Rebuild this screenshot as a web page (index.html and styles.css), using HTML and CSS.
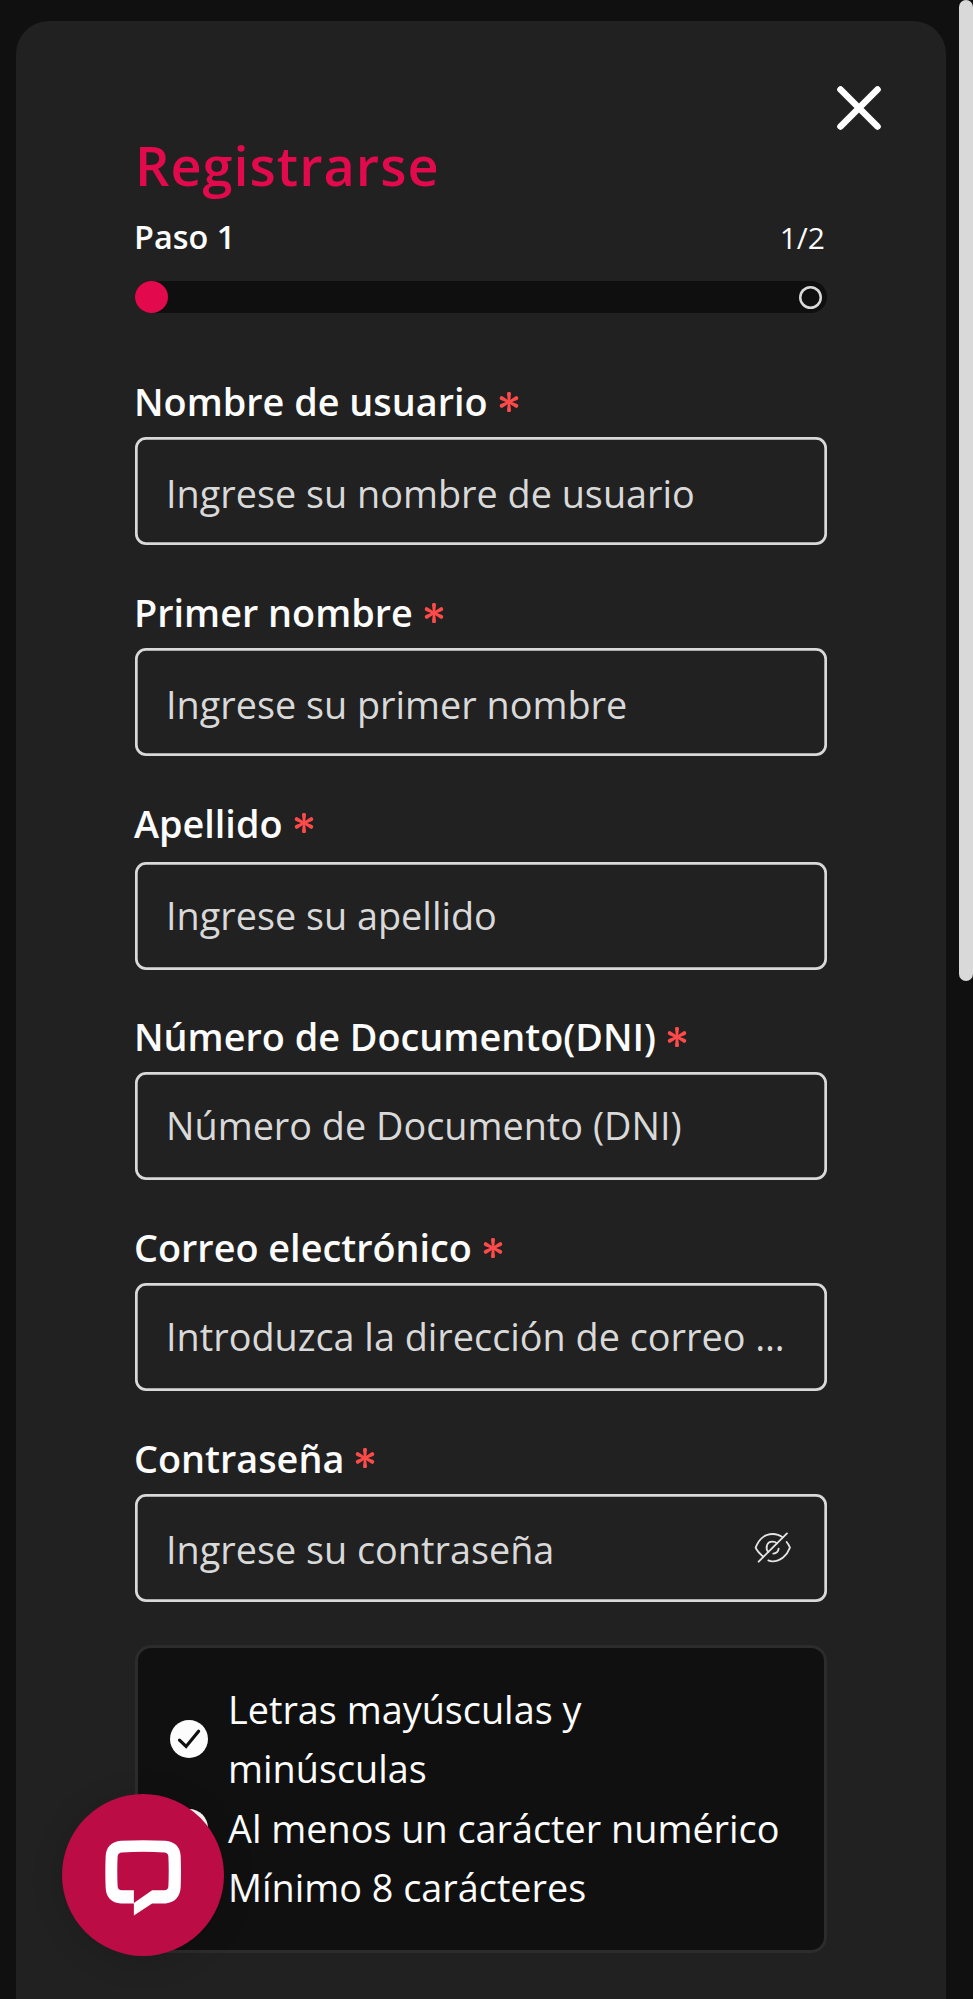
FILE: index.html
```
<!DOCTYPE html>
<html lang="es">

<head>
   <meta charset="UTF-8">
   <meta name="viewport" content="width=device-width, initial-scale=1.0">
   <title>Registrarse</title>
   <link rel="stylesheet" href="styles.css">
</head>

<body>
   <!-- shared icons -->
   <svg class="sprite">
      <symbol id="required" viewBox="0 0 20 20">
         <path d="M8 1.8a2 2 0 0 1 4 0L11 10l1 8.200a2 2 0 0 1-4 0L9 10z"/>
         <path d="M8 1.8a2 2 0 0 1 4 0L11 10l1 8.200a2 2 0 0 1-4 0L9 10z" transform="rotate(62 10 10)"/>
         <path d="M8 1.8a2 2 0 0 1 4 0L11 10l1 8.200a2 2 0 0 1-4 0L9 10z" transform="rotate(-62 10 10)"/>
      </symbol>
      <symbol id="check" viewBox="0 0 38 38">
         <circle cx="19" cy="19" r="19" fill="#fcfcfc"/>
         <path d="M9.5 20.2l6.6 6.3L28.6 11.300" fill="none" stroke="#101010" stroke-width="3.2" stroke-linecap="round"/>
      </symbol>
   </svg>

   <div class="modal">
      <button class="close" type="button" aria-label="Cerrar">
         <svg viewBox="0 0 44 44"><path d="M3.500 3.500l37 37M40.500 3.500l-37 37"/></svg>
      </button>

      <form class="form">
         <h1 class="title">Registrarse</h1>
         <div class="step">
            <span class="step-name">Paso 1</span>
            <span class="step-count">1/2</span>
         </div>
         <div class="progress">
            <span class="dot"></span>
            <span class="ring"></span>
         </div>

         <div class="field">
            <label for="user">Nombre de usuario <svg class="required"><use href="#required"/></svg></label>
            <input class="low" id="user" type="text" placeholder="Ingrese su nombre de usuario">
         </div>
         <div class="field">
            <label for="name">Primer nombre <svg class="required"><use href="#required"/></svg></label>
            <input class="low" id="name" type="text" placeholder="Ingrese su primer nombre">
         </div>
         <div class="field tall">
            <label for="surname">Apellido <svg class="required"><use href="#required"/></svg></label>
            <input id="surname" type="text" placeholder="Ingrese su apellido">
         </div>
         <div class="field">
            <label for="dni">Número de Documento(DNI) <svg class="required"><use href="#required"/></svg></label>
            <input id="dni" type="text" placeholder="Número de Documento (DNI)">
         </div>
         <div class="field">
            <label for="email">Correo electrónico <svg class="required"><use href="#required"/></svg></label>
            <input id="email" type="email" placeholder="Introduzca la dirección de correo electrónico">
         </div>
         <div class="field password">
            <label for="pass">Contraseña <svg class="required"><use href="#required"/></svg></label>
            <input class="low" id="pass" type="password" placeholder="Ingrese su contraseña">
            <svg class="eye" viewBox="762 877 112 92">
               <path d="M776 966L861 881"/>
               <path d="M790 951C780 943 771 934 767 924C776 899 795 883 818 883C829 883 839 886 848 893"/>
               <path d="M860 907C864 912 868 918 870 924C861 948 841 965 818 965C813 965 809 964 805 962"/>
               <path d="M805 937C795 926 800 906 817 906C822 906 827 907 831 911"/>
               <path d="M836 927C835 936 829 941 820 942"/>
            </svg>
         </div>

         <ul class="rules">
            <li><svg class="check"><use href="#check"/></svg><span>Letras mayúsculas y minúsculas</span></li>
            <li><svg class="check"><use href="#check"/></svg><span>Al menos un carácter numérico</span></li>
            <li><svg class="check"><use href="#check"/></svg><span>Mínimo 8 carácteres</span></li>
         </ul>
      </form>
   </div>

   <div class="scrollbar"></div>

   <button class="chat" type="button" aria-label="Chat">
      <svg viewBox="195 629 229 228">
         <path fill-rule="evenodd" d="M243 631Q310 627 377 631C405 634 421 648 423 676Q425 724 423 772C421 800 406 817 378 820H337L282 856V820H243C215 818 198 801 197 773Q195 724 197 677C199 649 215 634 243 631ZM246 666Q310 662 374 666Q385 667 386 678Q388 722 386 768Q385 780 374 780H337L282 818V780H246Q234 780 233 768Q231 722 233 678Q234 667 246 666Z"/>
      </svg>
   </button>
</body>

</html>
```
FILE: styles.css
```
* {
   margin: 0;
   padding: 0;
   box-sizing: border-box;
}

body {
   display: flow-root;
   position: relative;
   height: 1999px;
   overflow: hidden;
   background: #101010;
   color: #fcfcfc;
   font-family: "Open Sans", sans-serif;
   font-size: 37.8px;
}

button {
   border: none;
   background: none;
   cursor: pointer;
}

svg {
   display: block;
}

.sprite {
   position: absolute;
   width: 0;
   height: 0;
}

.modal {
   position: relative;
   width: 930px;
   height: 1978px;
   margin: 21px 0 0 16px;
   padding: 113px 119px 0;
   border-radius: 33px 33px 0 0;
   background: #212121;
}

.close {
   position: absolute;
   top: 65px;
   right: 65px;
   width: 44px;
   height: 44px;
}

.close path {
   stroke: #fff;
   stroke-width: 6.6;
   stroke-linecap: round;
}

.title {
   height: 74px;
   line-height: 63px;
   font-size: 54px;
   font-weight: 600;
   letter-spacing: 1px;
   color: #e20a4d;
}

.step {
   display: flex;
   justify-content: space-between;
   align-items: baseline;
   height: 73px;
   line-height: 56px;
   margin-left: -1px;
   padding-right: 2px;
}

.step-name {
   font-size: 32.4px;
   font-weight: 600;
}

.step-count {
   font-size: 30px;
}

.progress {
   display: flex;
   justify-content: space-between;
   align-items: center;
   height: 32px;
   margin-bottom: 61.4px;
   padding-right: 5px;
   border-radius: 16px;
   background: #0f0f0f;
}

.dot {
   width: 33px;
   height: 32px;
   border-radius: 50%;
   background: #e20a4d;
}

.ring {
   width: 23px;
   height: 23px;
   border-radius: 50%;
   box-shadow: inset 0 0 0 2.5px #d9d9d9;
}

.field {
   height: 210.8px;
}

.field.tall {
   height: 213.4px;
}

.field label {
   display: flex;
   align-items: center;
   gap: 11px;
   height: 63px;
   line-height: 55px;
   margin-left: -1px;
   padding-bottom: 8px;
   font-weight: 600;
}

.field.tall label {
   height: 65.6px;
   padding-bottom: 10.6px;
}

.required {
   width: 20px;
   height: 20px;
   fill: #ff4a4a;
}

input {
   display: block;
   width: 692px;
   height: 108px;
   padding: 0 30px 1px 31px;
   border: none;
   border-radius: 11px;
   box-shadow: inset 0 0 0 2.7px #d9d9d9;
   background: transparent;
   color: #fcfcfc;
   font: inherit;
   text-overflow: ellipsis;
}

input.low {
   padding: 4px 30px 0 31px;
}

input::placeholder {
   color: #d9d9d9;
}

.password {
   position: relative;
}

.eye {
   position: absolute;
   top: 101px;
   right: 36px;
   width: 37.3px;
   height: 30.7px;
   fill: none;
   stroke: #e4e4e4;
   stroke-width: 5.500;
   stroke-linecap: round;
}

.rules {
   width: 692px;
   height: 308px;
   margin-top: 3px;
   padding: 32px 40px 32px 32px;
   border: 3px solid #2c2c2c;
   border-radius: 16px;
   background: #101010;
   list-style: none;
   line-height: 59.4px;
}

.rules li {
   display: flex;
   align-items: center;
   gap: 20px;
}

.check {
   flex: none;
   width: 38px;
   height: 38px;
}

.scrollbar {
   position: absolute;
   top: 0;
   right: 0;
   width: 14px;
   height: 981px;
   border-radius: 7px;
   background: #d9d9d9;
}

.chat {
   position: absolute;
   left: 62px;
   top: 1794px;
   width: 162px;
   height: 162px;
   border-radius: 50%;
   background: #bb0c46;
   box-shadow: 0 4px 32px rgba(0, 0, 0, 0.15);
}

.chat svg {
   width: 76px;
   height: 76px;
   margin: 5px auto 0;
   fill: #fff;
}
```
